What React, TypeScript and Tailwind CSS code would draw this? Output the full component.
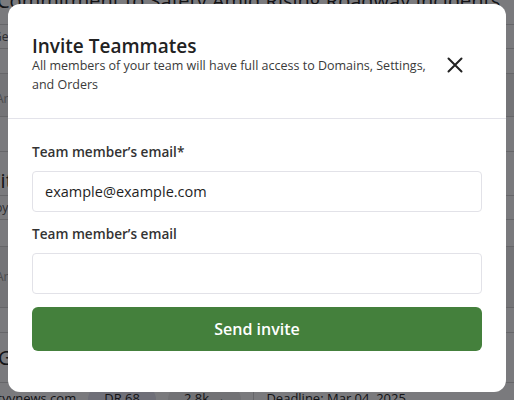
import React from "react";

const font = { fontFamily: "'Open Sans', 'Noto Sans', sans-serif" };

function Background() {
  return (
    <div className="-mt-[14px] flex flex-col bg-white text-[#222]">
      <div className="-ml-[3px] flex h-[38px] items-end pb-[10px] text-[20px] leading-[26px] whitespace-nowrap">
        Commitment to Safety Amid Rising Roadway Incidents
      </div>
      <div className="-ml-[7px] flex h-[25px] items-center border-y border-[#d4d4d4] text-[12px] text-[#555]">
        Getty Images · 5 min read
      </div>
      <div className="h-[25px] border-b border-[#d4d4d4]" />
      <div className="-ml-[4px] flex h-[43px] items-end border-b border-[#d4d4d4] bg-[#f1f1f1] pb-[8px] text-[12px] text-[#999]">
        Article topics
      </div>
      <div className="h-[35px] border-b border-[#d4d4d4]" />
      <div className="-ml-[12px] flex h-[43px] items-end pb-[1px] text-[20px] leading-[26px] whitespace-nowrap">
        City Council Approves New Community Safety Plan
      </div>
      <div className="-ml-[5px] flex h-[25px] items-center border-y border-[#d4d4d4] text-[12px] text-[#555]">
        by Daily news
      </div>
      <div className="h-[27px] border-b border-[#d4d4d4]" />
      <div className="-ml-[4px] flex h-[61px] items-center border-b border-[#d4d4d4] bg-[#f1f1f1] text-[12px] text-[#999]">
        Article topics
      </div>
      <div className="h-[25px] border-b border-[#d4d4d4]" />
      <div className="-ml-[2px] flex h-[50px] items-center border-b border-[#d4d4d4] text-[20px] whitespace-nowrap">
        Giving Back: Local Drivers Support Families
      </div>
      <div className="-ml-[12px] flex h-[28px] items-center gap-3 pt-[4px] text-[13px] whitespace-nowrap">
        <span>cityynews.com</span>
        <span className="rounded-full bg-[#e6e8f5] px-4 py-[2px]">DR 68</span>
        <span className="rounded-full bg-[#eeeeee] px-4 py-[2px]">2.8k →</span>
        <span className="h-6 border-l border-[#d4d4d4]" />
        <span>Deadline: Mar 04, 2025</span>
      </div>
    </div>
  );
}

export default function App() {
  return (
    <div className="relative h-[400px] w-[514px] overflow-hidden" style={font}>
      <Background />
      <div className="absolute inset-0 bg-[rgba(10,10,14,0.54)]" />
      <div className="absolute left-2 top-1 flex h-[388px] w-[498px] flex-col rounded-xl bg-white">
        <div className="flex items-center justify-between border-b border-[#e3e3ea] pl-6 pr-[43px] pt-[31px] pb-[24px]">
          <div className="w-[404px]">
            <h2 className="text-[19px] font-semibold leading-[22px] text-[#222]">Invite Teammates</h2>
            <p className="-mt-[1px] text-[12.5px] leading-[19px] text-[#3a3a3a]">
              All members of your team will have full access to Domains, Settings, and Orders
            </p>
          </div>
          <button className="flex h-4 w-4 items-center justify-center text-[#222]">
            <svg width="16" height="16" viewBox="0 0 16 16" fill="none">
              <path d="M1.5 1.5L14.5 14.5M14.5 1.5L1.5 14.5" stroke="currentColor" strokeWidth="2" strokeLinecap="round" />
            </svg>
          </button>
        </div>
        <div className="flex flex-col px-6 pt-[23px]">
          <label className="text-[13.6px] font-semibold leading-[20px] text-[#333]">Team member’s email*</label>
          <input
            className="mt-[9px] h-[41px] rounded border border-[#e2e2e8] px-3 text-[14.5px] text-[#1e1e1e] outline-none"
            defaultValue="example@example.com"
          />
          <label className="mt-3 text-[13.6px] font-semibold leading-[20px] text-[#333]">Team member’s email</label>
          <input className="mt-[9px] h-[41px] rounded border border-[#e2e2e8] px-3 text-[14.5px] outline-none" />
          <button className="mt-[13px] h-[44px] rounded-md bg-[#44803c] text-[16px] font-semibold text-white">
            Send invite
          </button>
        </div>
      </div>
    </div>
  );
}
